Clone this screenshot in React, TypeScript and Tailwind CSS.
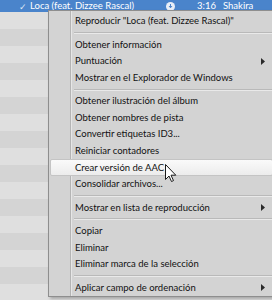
import React from "react";

type Entry = { label?: string; sub?: boolean; active?: boolean; sep?: boolean };

const items: Entry[] = [
  { label: "Reproducir \"Loca (feat. Dizzee Rascal)\"" },
  { sep: true },
  { label: "Obtener información" },
  { label: "Puntuación", sub: true },
  { label: "Mostrar en el Explorador de Windows" },
  { sep: true },
  { label: "Obtener ilustración del álbum" },
  { label: "Obtener nombres de pista" },
  { label: "Convertir etiquetas ID3..." },
  { label: "Reiniciar contadores" },
  { label: "Crear versión de AAC", active: true },
  { label: "Consolidar archivos..." },
  { sep: true },
  { label: "Mostrar en lista de reproducción", sub: true },
  { sep: true },
  { label: "Copiar" },
  { label: "Eliminar" },
  { label: "Eliminar marca de la selección" },
  { sep: true },
  { label: "Aplicar campo de ordenación", sub: true },
];

function SubArrow() {
  return (
    <svg width="4" height="7" viewBox="0 0 4 7" className="ml-auto mr-[10px] shrink-0">
      <path d="M0 0 L4 3.5 L0 7 Z" fill="#2a2a2a" />
    </svg>
  );
}

export default function App() {
  const stripes = Array.from({ length: 17 });

  return (
    <div
      className="relative w-[272px] h-[300px] overflow-hidden bg-[#d8d8d8] text-[9.5px]"
      style={{ fontFamily: "Lato, 'Liberation Sans', sans-serif" }}
    >
      {/* song list behind the menu */}
      <div className="flex flex-col">
        <div className="h-[12px] bg-[#4a84cb] text-white flex items-start leading-[12px] pl-[19px] whitespace-nowrap">
          <span className="w-[11px] text-[9px] text-[#dfe8f5] pt-[1px]">✓</span>
          <span className="w-[136px]">Loca (feat. Dizzee Rascal)</span>
          <span className="mt-[2px] w-[9px] h-[9px] rounded-full bg-[#e8eef7] flex items-center justify-center">
            <svg width="5" height="5" viewBox="0 0 5 5">
              <path d="M2.5 0 V3.5 M1 2 L2.5 3.8 L4 2" stroke="#4a84cb" strokeWidth="1" fill="none" />
            </svg>
          </span>
          <span className="w-[43px] text-right pr-[2px]">3:16</span>
          <span className="pl-[5px]">Shakira</span>
        </div>
        {stripes.map((_, i) => (
          <div key={i} className={i % 2 === 0 ? "h-[17px] bg-[#dfdfdf]" : "h-[17px] bg-[#d4d4d4]"} />
        ))}
      </div>

      {/* context menu */}
      <div className="absolute left-[48px] top-[10px] w-[228px] h-[287px] bg-[#d3d3d3] border border-[#8e8e8e] shadow-[2px_2px_3px_rgba(0,0,0,0.25)] text-[#111111] flex">
        <div className="w-[22px] shrink-0 border-r border-r-[#b4b4b4]" />
        <div className="w-px shrink-0 bg-[#e6e6e6]" />
        <div className="flex-1 flex flex-col pt-[2px] -ml-[23px]">
          {items.map((it, i) =>
            it.sep ? (
              <div key={i} className="h-[6.7px] flex flex-col justify-center pl-[25px] pr-[2px]">
                <div className="h-px bg-[#b9b9b9]" />
                <div className="h-px bg-[#e9e9e9]" />
              </div>
            ) : (
              <div
                key={i}
                className={
                  it.active
                    ? "h-[16.7px] flex items-center pl-[24px] ml-px mr-[2px] whitespace-nowrap rounded-[2px] border border-[#c4c4c4] bg-gradient-to-b from-[#fafafa] to-[#ececec]"
                    : "h-[16.7px] flex items-center pl-[26px] whitespace-nowrap"
                }
              >
                <span>{it.label}</span>
                {it.sub && <SubArrow />}
              </div>
            )
          )}
        </div>
      </div>

      {/* mouse pointer */}
      <svg width="12" height="19" viewBox="0 0 12 19" className="absolute left-[165px] top-[164px]">
        <path
          d="M0.5 0.5 L0.5 15.5 L4 12 L6.5 17.5 L8.5 16.6 L6 11.2 L10.8 11.2 Z"
          fill="#ffffff"
          stroke="#1a1a1a"
          strokeWidth="1"
          strokeLinejoin="round"
        />
      </svg>
    </div>
  );
}
